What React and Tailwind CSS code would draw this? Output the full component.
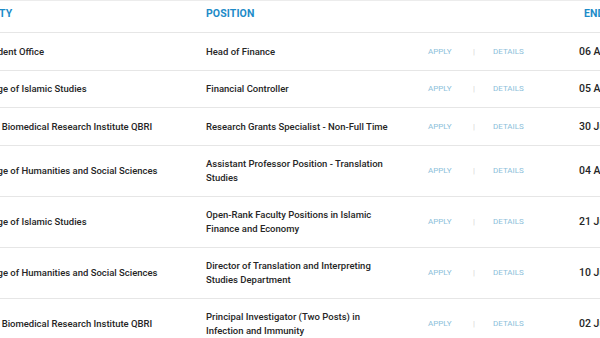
const jobs = [
  { entity: "President Office", position: "Head of Finance", date: "06 Aug 2024" },
  { entity: "College of Islamic Studies", position: "Financial Controller", date: "05 Aug 2024" },
  { entity: "Qatar Biomedical Research Institute QBRI", position: "Research Grants Specialist - Non-Full Time", date: "30 Jul 2024" },
  { entity: "College of Humanities and Social Sciences", position: "Assistant Professor Position - Translation Studies", date: "04 Aug 2024" },
  { entity: "College of Islamic Studies", position: "Open-Rank Faculty Positions in Islamic Finance and Economy", date: "21 Jul 2024" },
  { entity: "College of Humanities and Social Sciences", position: "Director of Translation and Interpreting Studies Department", date: "10 Jul 2024" },
  { entity: "Qatar Biomedical Research Institute QBRI", position: "Principal Investigator (Two Posts) in Infection and Immunity", date: "02 Jul 2024" },
];

function App() {
  return (
    <div className="w-[600px] h-[338px] overflow-hidden bg-white font-['Roboto',sans-serif]">
      <div className="ml-[-24px] w-[700px] border-t border-[#ececec]">
        <div className="grid grid-cols-[230px_222px_152px_1fr] h-[32px] items-center border-b border-[#e6e6e6] pb-[6px] text-[10.5px] font-bold text-[#1d8bc8] tracking-[0.1px]">
          <div>ENTITY</div>
          <div>POSITION</div>
          <div></div>
          <div className="pl-[4px]">END DATE</div>
        </div>
        {jobs.map((job, i) => (
          <div
            key={i}
            className="grid grid-cols-[230px_222px_152px_1fr] items-center border-b border-[#e6e6e6] py-[11.5px] text-[9.5px] leading-[13.5px] font-medium text-[#262626]"
          >
            <div>{job.entity}</div>
            <div className="max-w-[186px]">{job.position}</div>
            <div className="flex items-center text-[8px] font-normal text-[#8cc0da]">
              <span className="w-[45px]">APPLY</span>
              <span className="w-[20px] text-[#d4d4d4]">|</span>
              <span>DETAILS</span>
            </div>
            <div className="whitespace-nowrap text-[10.5px] ml-[-1px]">{job.date}</div>
          </div>
        ))}
      </div>
    </div>
  );
}

export default App;
